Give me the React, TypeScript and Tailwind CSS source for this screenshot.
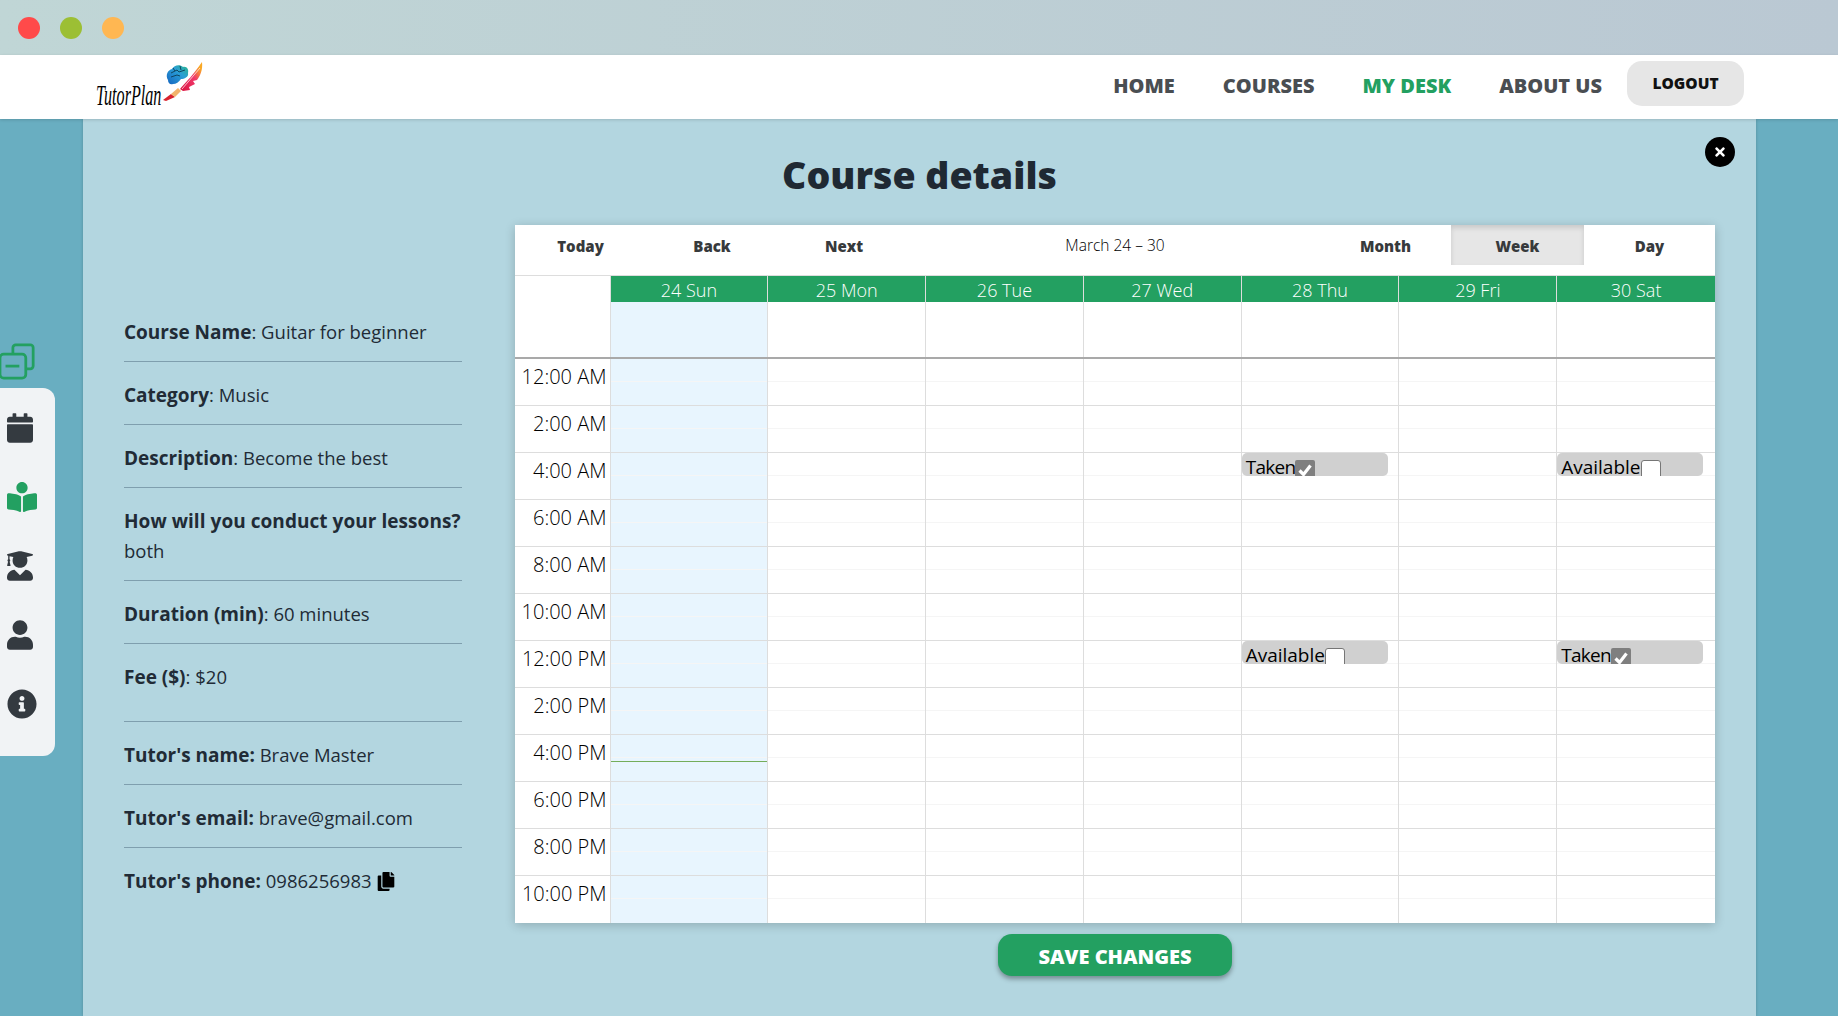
import React from 'react';
import { FaBookReader, FaCalendar, FaCopy, FaInfoCircle, FaTimes, FaUser, FaUserGraduate } from 'react-icons/fa';

const days = ['24 Sun', '25 Mon', '26 Tue', '27 Wed', '28 Thu', '29 Fri', '30 Sat'];
const times = ['12:00 AM', '2:00 AM', '4:00 AM', '6:00 AM', '8:00 AM', '10:00 AM', '12:00 PM', '2:00 PM', '4:00 PM', '6:00 PM', '8:00 PM', '10:00 PM'];

// row index + day index -> slot event
const events: Record<string, { label: string; taken: boolean }> = {
  '2-4': { label: 'Taken', taken: true },
  '2-6': { label: 'Available', taken: false },
  '6-4': { label: 'Available', taken: false },
  '6-6': { label: 'Taken', taken: true },
};

const details = [
  { label: 'Course Name', value: 'Guitar for beginner', colon: ':' },
  { label: 'Category', value: 'Music', colon: ':' },
  { label: 'Description', value: 'Become the best', colon: ':' },
  { label: 'How will you conduct your lessons?', value: 'both', colon: '' },
  { label: 'Duration (min)', value: '60 minutes', colon: ':' },
  { label: 'Fee ($)', value: '$20', colon: ':' },
];

const Logo = () => (
  <div className="flex items-end h-[54px] ml-[13px] mb-[2px]">
    <span className="w-[66px] shrink-0 whitespace-nowrap origin-bottom-left scale-x-[0.7] scale-y-[1.3] font-['Liberation_Serif',serif] italic text-[23px] leading-[24px] text-black -mb-[1px]">
      TutorPlan
    </span>
    <svg viewBox="0 0 44 52" className="w-[44px] h-[52px] shrink-0 mb-[2px]">
      <defs>
        <linearGradient id="feather" x1="0" y1="1" x2="1" y2="0">
          <stop offset="0" stopColor="#d9123f" />
          <stop offset="0.55" stopColor="#f0386b" />
          <stop offset="0.85" stopColor="#f9a825" />
        </linearGradient>
        <linearGradient id="brain" x1="0" y1="1" x2="1" y2="0">
          <stop offset="0" stopColor="#1565c0" />
          <stop offset="0.6" stopColor="#2a9fd6" />
          <stop offset="1" stopColor="#2bb68a" />
        </linearGradient>
      </defs>
      <path d="M1 44 L9 38 L13 41 L4 45 Z" fill="#d9232e" />
      <path d="M9 38 L16 32 L19 35 L13 41 Z" fill="#f2b36b" />
      <path d="M18 33 C24 26 32 18 40 6 C41 14 38 20 35 24 L31 25 L33 28 L27 31 L28 34 L21 35 Z" fill="url(#feather)" />
      <path d="M20 33 L38 12" stroke="#fff" strokeWidth="0.7" fill="none" />
      <path d="M6 24 C3 19 6 14 10 13 C12 9 18 8 21 11 C25 10 27 14 26 17 C27 21 22 23 19 23 C17 26 14 28 11 28 C8 29 6 27 6 24 Z" fill="url(#brain)" />
      <path d="M9 17 L15 14 L17 16 L23 14 M9 21 L15 19 L18 20 M11 12 L13 15 M18 10 L19 14" stroke="#0b3d55" strokeWidth="0.9" fill="none" />
    </svg>
  </div>
);

const Checkbox = ({ checked }: { checked: boolean }) =>
  checked ? (
    <span className="block w-[20px] h-[20px] mt-[7px] bg-[#7f7f7f] rounded-[2px]">
      <svg viewBox="0 0 20 20" className="w-[20px] h-[20px]">
        <path d="M4.5 10.5 L8.5 14.5 L15.5 5.5" stroke="#fff" strokeWidth="3.2" fill="none" />
      </svg>
    </span>
  ) : (
    <span className="block w-[20px] h-[20px] mt-[7px] bg-white border border-[#767676] rounded-[3px]" />
  );

const App = () => (
  <div className="h-screen overflow-hidden flex flex-col bg-[#69aec1] font-['Open_Sans',sans-serif] text-[#212b36]">
    {/* window bar */}
    <div className="h-[55px] shrink-0 flex items-center gap-[20px] pl-[18px] bg-gradient-to-r from-[#c0d6d6] to-[#bac8d3]">
      <span className="w-[22px] h-[22px] rounded-full bg-[#ff4a4a]" />
      <span className="w-[22px] h-[22px] rounded-full bg-[#9cbf34]" />
      <span className="w-[22px] h-[22px] rounded-full bg-[#ffb752]" />
    </div>

    {/* nav */}
    <div className="h-[64px] shrink-0 bg-white flex items-center pb-[7px] pl-[83px] pr-[94px] z-10 shadow-[0_1px_3px_rgba(0,0,0,0.15)]">
      <Logo />
      <div className="ml-auto flex items-center text-[20px] font-extrabold text-[#4a4e52]">
        <span className="mr-[48px] pt-[5px]">HOME</span>
        <span className="mr-[48px] pt-[5px]">COURSES</span>
        <span className="mr-[48px] pt-[5px] text-[#23a061]">MY DESK</span>
        <span className="mr-[25px] pt-[5px]">ABOUT US</span>
        <button className="w-[117px] h-[45px] rounded-[15px] bg-[#e6e6e6] text-[15.5px] font-extrabold text-[#111]">LOGOUT</button>
      </div>
    </div>

    <div className="flex-1 flex min-h-0">
      {/* left sidebar */}
      <div className="w-[83px] shrink-0 pt-[224px]">
        <svg viewBox="-3 0 38 38" className="w-[35px] h-[37px] text-[#23a061]" fill="none" stroke="currentColor" strokeWidth="3">
          <path d="M11 11 V4 a3 3 0 0 1 3 -3 H30 a3 3 0 0 1 3 3 V24 a3 3 0 0 1 -3 3 H26" />
          <rect x="-3" y="11" width="28" height="26" rx="4" />
          <path d="M3 24 H18" />
        </svg>
        <div className="mt-[8px] w-[55px] h-[368px] rounded-r-[12px] bg-[#f1f3f5] flex flex-col gap-[39px] pt-[25px] pl-[7px] text-[#343a40]">
          <FaCalendar className="w-[26px] h-[30px]" />
          <FaBookReader className="w-[30px] h-[30px] text-[#23a061]" />
          <FaUserGraduate className="w-[26px] h-[30px]" />
          <FaUser className="w-[26px] h-[30px]" />
          <FaInfoCircle className="w-[30px] h-[30px]" />
        </div>
      </div>

      {/* panel */}
      <div className="relative w-[1673px] shrink-0 bg-[#b3d6e0] shadow-[0_0_3px_rgba(0,0,0,0.2)]">
        <button className="absolute top-[18px] right-[21px] w-[30px] h-[30px] rounded-full bg-black text-white flex items-center justify-center">
          <FaTimes className="w-[14px] h-[14px]" />
        </button>
        <h1 className="text-center text-[37.5px] leading-[50px] font-extrabold text-[#1f2933] pt-[31px]">Course details</h1>

        <div className="flex mt-[25px] pl-[41px]">
          {/* course info */}
          <div className="w-[338px] shrink-0 pt-[74px] text-[18.5px] leading-[30px] [&_b]:text-[19px]">
            {details.map((d, i) => (
              <div key={d.label} className={`border-b border-[#7f9fae] pt-[18px] ${i === 5 ? 'pb-[29px]' : 'pb-[14px]'}`}>
                <b className={d.colon ? '' : 'block whitespace-nowrap tracking-[0.05px]'}>{d.label}</b>{d.colon} {d.value}
              </div>
            ))}
            <div className="border-b border-[#7f9fae] pt-[18px] pb-[14px]"><b>Tutor's name:</b> Brave Master</div>
            <div className="border-b border-[#7f9fae] pt-[18px] pb-[14px]"><b>Tutor's email:</b> brave@gmail.com</div>
            <div className="pt-[18px] flex items-center gap-[5px]">
              <span><b>Tutor's phone:</b> 0986256983</span>
              <FaCopy className="w-[18px] h-[19px] text-black" />
            </div>
          </div>

          {/* calendar */}
          <div className="ml-[53px] w-[1200px] shrink-0 flex flex-col items-center">
            <div className="w-full bg-white shadow-[0_2px_10px_rgba(0,0,0,0.2)] text-[#212121]">
              <div className="h-[50px] flex items-start text-[15px] font-extrabold text-[#373a3c]">
                <span className="w-[131px] h-[40px] flex items-center justify-center pt-[2px]">Today</span>
                <span className="w-[132px] h-[40px] flex items-center justify-center pt-[2px]">Back</span>
                <span className="w-[132px] h-[40px] flex items-center justify-center pt-[2px]">Next</span>
                <span className="flex-1 h-[40px] flex items-center justify-center text-[15.5px] font-light text-black pt-[1px]">March 24 – 30</span>
                <span className="w-[131px] h-[40px] flex items-center justify-center pt-[2px]">Month</span>
                <span className="w-[133px] h-[40px] flex items-center justify-center pt-[2px] bg-[#e6e6e6] shadow-[inset_0_3px_5px_rgba(0,0,0,0.125)]">Week</span>
                <span className="w-[131px] h-[40px] flex items-center justify-center pt-[2px]">Day</span>
              </div>

              <div className="flex border-t border-[#ddd]">
                <div className="w-[95.5px] shrink-0 h-[81px] border-r border-[#ddd]" />
                <div className="flex-1 grid grid-cols-7">
                  {days.map((d, i) => (
                    <div key={d} className="border-r border-[#ddd] last:border-r-0 h-[81px] flex flex-col">
                      <div className="h-[26px] bg-[#23a061] text-white text-[18px] leading-[28px] font-light text-center">{d}</div>
                      <div className={`flex-1 ${i === 0 ? 'bg-[#e8f5fe]' : ''}`} />
                    </div>
                  ))}
                </div>
              </div>

              <div className="border-t-2 border-[#a9a9a9]">
                {times.map((t, r) => (
                  <div key={t} className={`flex h-[47px] ${r === times.length - 1 ? '' : 'border-b border-[#ddd]'}`}>
                    <div className="w-[95.5px] shrink-0 border-r border-[#ddd] text-right pr-[3px] text-[20px] leading-[30px] pt-[3px] font-light text-black whitespace-nowrap">{t}</div>
                    <div className="flex-1 grid grid-cols-7">
                      {days.map((d, c) => {
                        const ev = events[`${r}-${c}`];
                        return (
                          <div key={d} className={`relative border-r border-[#ddd] last:border-r-0 ${c === 0 ? 'bg-[#e8f5fe]' : ''}`}>
                            <div className="h-[23px] border-b border-[#f5f5f5]">
                              {ev && (
                                <div className="w-[146px] h-[23px] rounded-[5px] bg-[#d0d0d0] flex items-start pl-[4px] text-[19px] leading-[29px] text-black">
                                  <span className={`h-[29px] ${ev.taken ? 'tracking-[-0.7px]' : ''}`}>{ev.label}</span>
                                  <span className="block w-[20px] h-[23px] overflow-hidden">
                                    <Checkbox checked={ev.taken} />
                                  </span>
                                </div>
                              )}
                            </div>
                            {r === 8 && c === 0 && <div className="absolute left-0 right-0 top-[26px] h-px bg-[#74ad5a]" />}
                          </div>
                        );
                      })}
                    </div>
                  </div>
                ))}
              </div>
            </div>

            <button className="mt-[11px] w-[234px] h-[42px] rounded-[14px] bg-[#23a061] text-white text-[20px] leading-[28px] pt-[3px] font-extrabold shadow-[0_3px_5px_rgba(0,0,0,0.35)]">
              SAVE CHANGES
            </button>
          </div>
        </div>
      </div>
    </div>
  </div>
);

export default App;
